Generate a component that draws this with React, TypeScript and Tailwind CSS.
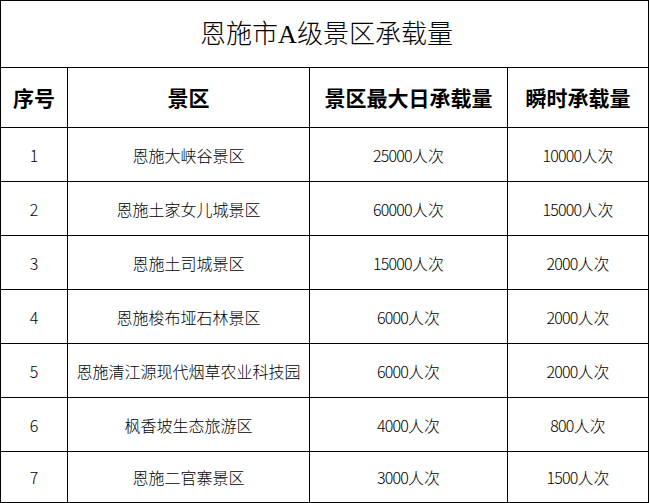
import React from "react";

const rows = [
  { no: "1", name: "恩施大峡谷景区", max: "25000", now: "10000" },
  { no: "2", name: "恩施土家女儿城景区", max: "60000", now: "15000" },
  { no: "3", name: "恩施土司城景区", max: "15000", now: "2000" },
  { no: "4", name: "恩施梭布垭石林景区", max: "6000", now: "2000" },
  { no: "5", name: "恩施清江源现代烟草农业科技园", max: "6000", now: "2000" },
  { no: "6", name: "枫香坡生态旅游区", max: "4000", now: "800" },
  { no: "7", name: "恩施二官寨景区", max: "3000", now: "1500" },
];

const cell = "flex items-center justify-center border-r border-b border-black";

const Num: React.FC<{ v: string }> = ({ v }) => (
  <span>
    <span className="tracking-[-0.8px]">{v}</span>人次
  </span>
);

const App: React.FC = () => {
  return (
    <div className="w-[650px] h-[503px] bg-white text-black overflow-hidden">
      <div
        className="w-[649px] border-l border-t border-black grid grid-cols-[67px_242px_198px_141px]"
        style={{ fontFamily: '"Noto Sans CJK SC", "Noto Sans", sans-serif' }}
      >
        <div
          className={`${cell} col-span-4 h-[67px] text-[26px] font-light pl-[4px]`}
          style={{ fontFamily: '"Liberation Serif", "Noto Sans CJK SC", serif' }}
        >
          恩施市A级景区承载量
        </div>

        {["序号", "景区", "景区最大日承载量", "瞬时承载量"].map((h) => (
          <div key={h} className={`${cell} h-[60px] text-[21px] font-bold`}>
            {h}
          </div>
        ))}

        {rows.map((r, i) => {
          const h = i === rows.length - 1 ? "h-[51px]" : "h-[54px]";
          return (
            <React.Fragment key={r.no}>
              <div className={`${cell} ${h} text-[16px] font-light`}>{r.no}</div>
              <div className={`${cell} ${h} text-[16px] font-light`}>{r.name}</div>
              <div className={`${cell} ${h} text-[16px] font-light`}>
                <Num v={r.max} />
              </div>
              <div className={`${cell} ${h} text-[16px] font-light`}>
                <Num v={r.now} />
              </div>
            </React.Fragment>
          );
        })}
      </div>
    </div>
  );
};

export default App;
